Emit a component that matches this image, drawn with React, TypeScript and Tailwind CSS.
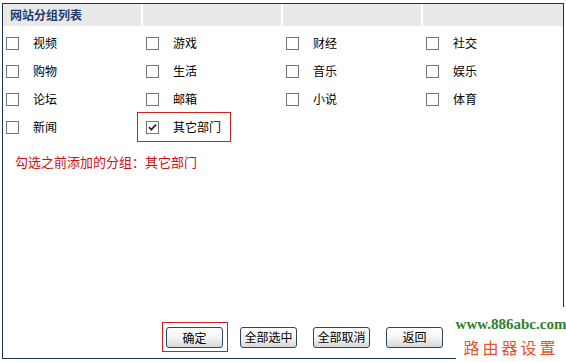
import React from "react";

const groups = [
  ["视频", "游戏", "财经", "社交"],
  ["购物", "生活", "音乐", "娱乐"],
  ["论坛", "邮箱", "小说", "体育"],
  ["新闻", "其它部门"],
];

function Box({ checked }: { checked?: boolean }) {
  return (
    <span className="w-[13px] h-[13px] border border-[#767676] bg-white flex items-center justify-center shrink-0">
      {checked && (
        <svg width="9" height="9" viewBox="0 0 9 9">
          <path d="M1 4.2 L3.3 6.6 L8 1.6" stroke="#2a2a2a" strokeWidth="1.8" fill="none" />
        </svg>
      )}
    </span>
  );
}

function Btn({ label }: { label: string }) {
  return (
    <button className="w-[57px] h-[21px] rounded-[3px] border border-[#2b4766] bg-linear-to-b from-white via-[#f4f4f4] to-[#d8d8d8] text-[12px] leading-none text-black">
      {label}
    </button>
  );
}

export default function App() {
  return (
    <div
      className="w-[566px] h-[362px] bg-white relative pl-[2px] pt-[3px] text-[12px] text-black"
      style={{ fontFamily: '"Noto Sans CJK SC", "Liberation Sans", sans-serif' }}
    >
      <div className="w-[562px] h-[356px] border border-[#1c3350] flex flex-col">
        <div className="flex h-[22px] bg-[#e9e9e9]">
          <div className="w-[140px] border-r-2 border-white flex items-center pl-[7px] font-bold text-[#1f3c6e]">
            网站分组列表
          </div>
          <div className="w-[140px] border-r-2 border-white" />
          <div className="w-[140px] border-r-2 border-white" />
          <div className="flex-1" />
        </div>

        <div className="pt-[3px]">
          {groups.map((row, r) => (
            <div key={r} className="flex h-[28px]">
              {row.map((name) => {
                const picked = name === "其它部门";
                return (
                  <div key={name} className="w-[140px] flex items-center pl-[3px]">
                    {picked ? (
                      <div className="flex items-center h-[30px] -ml-[9px] pl-[8px] pr-[9px] border border-[#d21f1f]">
                        <Box checked />
                        <span className="ml-[14px] leading-none">{name}</span>
                      </div>
                    ) : (
                      <>
                        <Box />
                        <span className="ml-[14px] leading-none">{name}</span>
                      </>
                    )}
                  </div>
                );
              })}
            </div>
          ))}
        </div>

        <p className="mt-[14px] pl-[12px] text-[13px] leading-[14px] text-[#cc1111]">
          勾选之前添加的分组：其它部门
        </p>

        <div className="flex-1" />

        <div className="flex items-center pl-[159px] pb-[6px]">
          <div className="border border-[#d21f1f] pt-[4px] pb-[3px] pl-[3px] pr-[4px] flex">
            <Btn label="确定" />
          </div>
          <div className="flex gap-[16px] ml-[12px]">
            <Btn label="全部选中" />
            <Btn label="全部取消" />
            <Btn label="返回" />
          </div>
        </div>
      </div>

      <div className="absolute left-[456px] top-[307px] right-0 bottom-0 bg-white flex flex-col items-center pt-[9px]">
        <span
          className="font-bold text-[15px] leading-[17px] text-[#2f7f2f]"
          style={{ fontFamily: '"Liberation Serif", serif' }}
        >
          www.886abc.com
        </span>
        <span className="mt-[5px] text-[16px] leading-[18px] tracking-[3px] text-[#e2532c]">
          路由器设置
        </span>
      </div>
    </div>
  );
}
